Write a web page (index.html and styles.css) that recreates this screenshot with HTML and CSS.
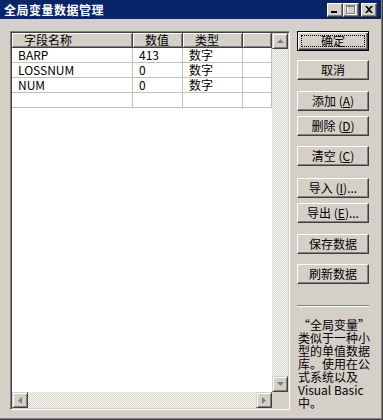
FILE: index.html
```html
<!DOCTYPE html>
<html lang="zh-CN">
<head>
    <meta charset="UTF-8">
    <title>全局变量数据管理</title>
    <link rel="stylesheet" href="styles.css">
</head>
<body>
    <div class="window">
        <div class="titlebar">
            <span class="title">全局变量数据管理</span>
            <div class="caption-btns">
                <span class="cap-btn">
                    <svg width="8" height="7" viewBox="0 0 8 7"><rect x="0" y="5" width="6" height="2" fill="#000"/></svg>
                </span>
                <span class="cap-btn">
                    <svg width="10" height="10" viewBox="0 0 10 10">
                        <rect x="1.5" y="1.5" width="8" height="8" fill="none" stroke="#fff"/>
                        <rect x="0.5" y="0.5" width="8" height="8" fill="none" stroke="#808080"/>
                        <rect x="0" y="1" width="9" height="1" fill="#808080"/>
                    </svg>
                </span>
                <span class="cap-btn close">
                    <svg width="8" height="7" viewBox="0 0 8 7">
                        <path d="M0 0h2l2 2 2-2h2L5 3.5 8 7H6L4 5 2 7H0l3-3.5z" fill="#000"/>
                    </svg>
                </span>
            </div>
        </div>

        <div class="client">
            <!-- liste des variables -->
            <div class="listview">
                <div class="list-area">
                    <div class="row header">
                        <div class="hcell">字段名称</div>
                        <div class="hcell">数值</div>
                        <div class="hcell">类型</div>
                        <div class="hcell"></div>
                    </div>
                    <div class="row">
                        <div class="cell">BARP</div>
                        <div class="cell">413</div>
                        <div class="cell">数字</div>
                        <div class="cell"></div>
                    </div>
                    <div class="row">
                        <div class="cell">LOSSNUM</div>
                        <div class="cell">0</div>
                        <div class="cell">数字</div>
                        <div class="cell"></div>
                    </div>
                    <div class="row">
                        <div class="cell">NUM</div>
                        <div class="cell">0</div>
                        <div class="cell">数字</div>
                        <div class="cell"></div>
                    </div>
                    <div class="row">
                        <div class="cell"></div>
                        <div class="cell"></div>
                        <div class="cell"></div>
                        <div class="cell"></div>
                    </div>
                </div>
                <div class="vscroll">
                    <div class="sb-btn">
                        <svg width="7" height="4" viewBox="0 0 7 4"><path d="M3.5 0L7 4H0z" fill="#808080"/></svg>
                    </div>
                    <div class="sb-track"></div>
                    <div class="sb-btn">
                        <svg width="7" height="4" viewBox="0 0 7 4"><path d="M0 0h7L3.5 4z" fill="#808080"/></svg>
                    </div>
                </div>
                <div class="hscroll">
                    <div class="sb-btn">
                        <svg width="4" height="7" viewBox="0 0 4 7"><path d="M4 0v7L0 3.5z" fill="#808080"/></svg>
                    </div>
                    <div class="sb-track"></div>
                    <div class="sb-btn">
                        <svg width="4" height="7" viewBox="0 0 4 7"><path d="M0 0l4 3.5L0 7z" fill="#808080"/></svg>
                    </div>
                </div>
                <div class="corner"></div>
            </div>

            <!-- boutons -->
            <div class="side">
                <button class="btn default"><span class="focus">确定</span></button>
                <button class="btn mt9">取消</button>
                <button class="btn mt11">添加 (<u>A</u>)</button>
                <button class="btn mt5">删除 (<u>D</u>)</button>
                <button class="btn mt10">清空 (<u>C</u>)</button>
                <button class="btn mt12">导入 (<u>I</u>)...</button>
                <button class="btn mt5">导出 (<u>E</u>)...</button>
                <button class="btn mt11">保存数据</button>
                <button class="btn mt10">刷新数据</button>
                <div class="sep"></div>
                <p class="note">“全局变量”<br>类似于一种小<br>型的单值数据<br>库。使用在公<br>式系统以及<br>Visual Basic<br>中。</p>
            </div>
        </div>
    </div>
</body>
</html>
```

FILE: styles.css
```css
:root {
    --face: #d4d0c8;
    --shadow: #808080;
    --dark: #404040;
    --light: #ffffff;
    --title: #0a246a;
    --grid: #c0c0c0;
}

* {
    margin: 0;
    padding: 0;
    box-sizing: border-box;
}

body {
    font-family: "Noto Sans CJK SC", "Liberation Sans", sans-serif;
    font-size: 12px;
    color: #000;
    background: var(--face);
}

.window {
    width: 383px;
    height: 420px;
    background: var(--face);
    border-right: 1px solid var(--dark);
    border-bottom: 1px solid var(--dark);
    box-shadow: inset -1px -1px var(--shadow);
    display: flex;
    flex-direction: column;
}

.titlebar {
    height: 19px;
    margin-right: 1px;
    background: var(--title);
    display: flex;
    align-items: center;
    justify-content: space-between;
    padding: 0 4px 0 4px;
}

.title {
    color: var(--light);
    font-weight: 700;
    font-size: 12px;
    letter-spacing: 0.5px;
    line-height: 19px;
}

.caption-btns {
    display: flex;
}

.cap-btn {
    width: 16px;
    height: 14px;
    background: var(--face);
    border: 1px solid;
    border-color: var(--light) var(--dark) var(--dark) var(--light);
    box-shadow: inset -1px -1px var(--shadow);
    display: flex;
    align-items: center;
    justify-content: center;
}

.cap-btn.close {
    margin-left: 2px;
}

.client {
    flex: 1;
    display: flex;
    padding: 12px 0 0 10px;
    gap: 7px;
}

/* liste */
.listview {
    width: 280px;
    height: 379px;
    border: 1px solid;
    border-color: var(--shadow) var(--light) var(--light) var(--shadow);
    box-shadow: inset 1px 1px var(--dark), inset -1px -1px var(--face);
    padding: 1px;
    display: grid;
    grid-template-columns: 260px 16px;
    grid-template-rows: 359px 16px;
}

.list-area {
    background: var(--light);
}

.row {
    display: grid;
    grid-template-columns: 121px 50px 60px 29px;
    height: 15px;
    border-bottom: 1px solid var(--grid);
}

.row.header {
    border-bottom: 1px solid var(--dark);
}

.hcell {
    background: var(--face);
    border-right: 1px solid var(--dark);
    box-shadow: inset 1px 1px var(--light), inset -1px -1px var(--shadow);
    padding-left: 12px;
    line-height: 14px;
    white-space: nowrap;
}

.cell {
    border-right: 1px solid var(--grid);
    padding-left: 6px;
    line-height: 14px;
    white-space: nowrap;
}

.vscroll {
    display: flex;
    flex-direction: column;
}

.hscroll {
    display: flex;
}

.sb-track {
    flex: 1;
    background: repeating-conic-gradient(var(--light) 0 25%, var(--face) 0 50%) 0 0 / 2px 2px;
}

.sb-btn {
    width: 16px;
    height: 16px;
    flex: none;
    background: var(--face);
    border: 1px solid;
    border-color: var(--face) var(--dark) var(--dark) var(--face);
    box-shadow: inset 1px 1px var(--light), inset -1px -1px var(--shadow);
    display: flex;
    align-items: center;
    justify-content: center;
}

.corner {
    background: var(--face);
}

/* colonne de boutons */
.side {
    width: 72px;
    display: flex;
    flex-direction: column;
}

.btn {
    width: 72px;
    height: 20px;
    font-family: inherit;
    font-size: 12px;
    color: #000;
    background: var(--face);
    border: 1px solid;
    border-color: var(--light) var(--dark) var(--dark) var(--light);
    box-shadow: inset -1px -1px var(--shadow);
    display: flex;
    align-items: center;
    justify-content: center;
    line-height: 14px;
}

.btn u {
    text-underline-offset: 1px;
}

.btn.default {
    border: 1px solid #000;
    box-shadow: inset 1px 1px var(--light), inset -1px -1px var(--dark), inset -2px -2px var(--shadow);
    padding: 3px;
}

.btn .focus {
    width: 100%;
    height: 100%;
    border: 1px dotted #000;
    display: flex;
    align-items: center;
    justify-content: center;
}

.mt5 { margin-top: 5px; }
.mt9 { margin-top: 9px; }
.mt10 { margin-top: 10px; }
.mt11 { margin-top: 11px; }
.mt12 { margin-top: 12px; }

.sep {
    margin-top: 21px;
    height: 2px;
    border-top: 1px solid var(--shadow);
    border-bottom: 1px solid var(--light);
}

.note {
    margin-top: 11px;
    padding-left: 1px;
    line-height: 13px;
    white-space: nowrap;
}
```
